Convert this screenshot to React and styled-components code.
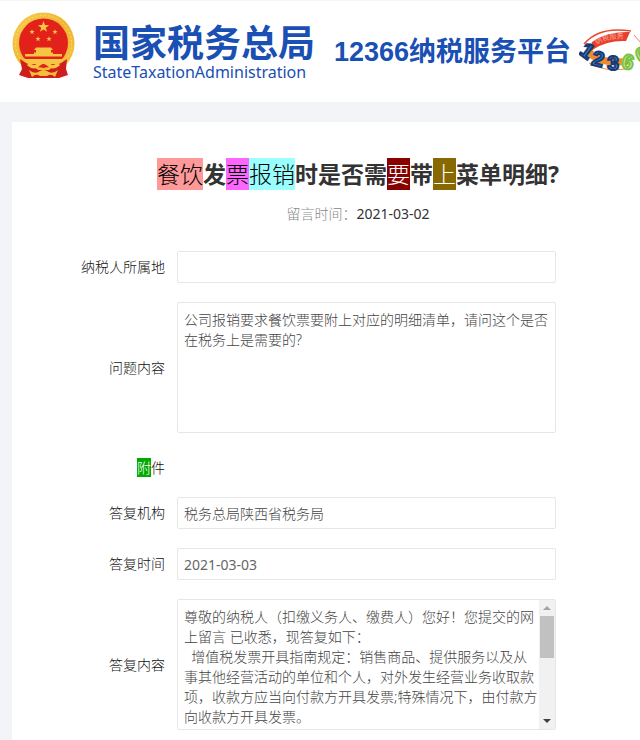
import styled, { createGlobalStyle } from 'styled-components';

const question =
  '公司报销要求餐饮票要附上对应的明细清单，请问这个是否在税务上是需要的?';

const reply = [
  '尊敬的纳税人（扣缴义务人、缴费人）您好！您提交的网上留言 已收悉，现答复如下：',
  '  增值税发票开具指南规定：销售商品、提供服务以及从事其他经营活动的单位和个人，对外发生经营业务收取款项，收款方应当向付款方开具发票;特殊情况下，由付款方向收款方开具发票。',
].join('\n');

const Star = ({ x, y, r }) => {
  const points = Array.from({ length: 10 }, (_, i) => {
    const radius = i % 2 ? r * 0.4 : r;
    const angle = (Math.PI / 5) * i - Math.PI / 2;
    return `${x + radius * Math.cos(angle)},${y + radius * Math.sin(angle)}`;
  }).join(' ');
  return <polygon points={points} fill="#f9c646" />;
};

const Emblem = () => (
  <svg width="63" height="68" viewBox="0 0 63 68" aria-hidden="true">
    <defs>
      <linearGradient id="gold" x1="0" y1="0" x2="1" y2="1">
        <stop offset="0" stopColor="#f6cf55" />
        <stop offset="0.5" stopColor="#efb52f" />
        <stop offset="1" stopColor="#f4c545" />
      </linearGradient>
    </defs>
    <circle cx="31.5" cy="31.5" r="31" fill="url(#gold)" />
    <circle cx="31.5" cy="31.5" r="28" fill="none" stroke="#f9dc75" strokeWidth="1" strokeDasharray="2 2" />
    <circle cx="31.5" cy="31" r="24.5" fill="#e3211b" />
    <Star x={31.5} y={15} r={6} />
    <Star x={20} y={20} r={2.8} />
    <Star x={43} y={20} r={2.8} />
    <Star x={26} y={27} r={2.8} />
    <Star x={37} y={27} r={2.8} />
    <path d="M24 35.5 H39 L41 38 H22 Z M24 38 H39 V41 H24 Z M22 40.5 H41 V42 H50 V44.5 H13 V42 H22 Z" fill="#f6c544" />
    <path d="M11 47 H52 L47 52 L37 52 Q31.5 48 26 52 L16 52 Z" fill="#f6c544" />
    <path d="M8 47 Q14 52 21 54 L26 58 H37 L42 54 Q49 52 55 47 L54 57 L56 63 L47 66 H16 L7 63 L10 57 Z" fill="#cf1f1c" />
    <path d="M16 52 Q22 57 26 53 Q31.5 48 37 53 Q41 57 47 52" fill="none" stroke="#f6c544" strokeWidth="3.5" />
    <path d="M17 58 Q23 63 28 59 Q31.5 57 35 59 Q40 63 46 58 L43 65 Q39 61 35 64 H28 Q24 61 20 65 Z" fill="#f4bd3a" />
    <circle cx="31.5" cy="54" r="2" fill="#e3211b" />
  </svg>
);

const HotlineLogo = () => (
  <svg width="84" height="46" viewBox="0 0 84 46" role="img" aria-label="12366">
    <path d="M5 15 Q20 -3 52 2" fill="none" stroke="#e9472c" strokeWidth="1.5" />
    <path d="M13 13 Q28 2 51 3 L47 12 Q29 11 15 20 L10 24 Z" fill="#e8402a" />
    <path d="M55 6 Q63 13 65 22" fill="none" stroke="#e9836b" strokeWidth="1" />
    <path d="M9 22 Q20 36 50 32" fill="none" stroke="#f28a2c" strokeWidth="7" />
    <path d="M10 34 Q25 43 47 40" fill="none" stroke="#ef8a50" strokeWidth="1" />
    <path id="band" d="M18 16 Q30 8 50 10" fill="none" />
    <LogoCaption>
      <textPath href="#band">纳税服务</textPath>
    </LogoCaption>
    <LogoDigit x="8" y="29" $tone="blue" transform="rotate(36 8 22)">1</LogoDigit>
    <LogoDigit x="19" y="37" $tone="blue" transform="rotate(14 19 30)">2</LogoDigit>
    <LogoDigit x="34" y="41" $tone="blue">3</LogoDigit>
    <LogoDigit x="49" y="40" $tone="green" transform="rotate(12 49 33)">6</LogoDigit>
    <LogoDigit x="63" y="33" $tone="green" transform="rotate(-25 63 26)">6</LogoDigit>
  </svg>
);

const FormRow = ({ id, label, children }) => (
  <Row>
    <Label htmlFor={id}>{label}</Label>
    {children}
  </Row>
);

const ScrollTextarea = props => (
  <ScrollBox>
    <BareTextarea {...props} />
    <ScrollTrack aria-hidden="true">
      <svg width="16" height="16" viewBox="0 0 16 16">
        <path d="M4 10 L8 6 L12 10 Z" fill="#a3a3a3" />
      </svg>
      <ScrollThumb />
      <svg width="16" height="16" viewBox="0 0 16 16">
        <path d="M4 6 L8 10 L12 6 Z" fill="#404040" />
      </svg>
    </ScrollTrack>
  </ScrollBox>
);

const App = () => {
  return (
    <>
      <GlobalStyle />
      <Page>
        <Header>
          <Emblem />
          <Brand>
            <BrandName>国家税务总局</BrandName>
            <BrandSub>StateTaxationAdministration</BrandSub>
          </Brand>
          <Platform>12366纳税服务平台</Platform>
          <HotlineLogo />
        </Header>
        <Card>
          <Title>
            <Mark $bg="#ff9999">餐饮</Mark>发<Mark $bg="#ff66ff">票</Mark>
            <Mark $bg="#99ffff">报销</Mark>时是否需
            <Mark $bg="#880000" $color="#fff">要</Mark>带
            <Mark $bg="#886800" $color="#fff">上</Mark>菜单明细?
          </Title>
          <Posted>
            留言时间：<time dateTime="2021-03-02">2021-03-02</time>
          </Posted>
          <Form>
            <FormRow id="region" label="纳税人所属地">
              <Input id="region" readOnly />
            </FormRow>
            <FormRow id="question" label="问题内容">
              <Textarea id="question" readOnly defaultValue={question} />
            </FormRow>
            <AttachmentRow>
              <LabelText>
                <Mark $bg="#00aa00" $color="#fff">附</Mark>件
              </LabelText>
            </AttachmentRow>
            <FormRow id="office" label="答复机构">
              <Input id="office" readOnly defaultValue="税务总局陕西省税务局" />
            </FormRow>
            <FormRow id="replyDate" label="答复时间">
              <DateInput id="replyDate" readOnly defaultValue="2021-03-03" />
            </FormRow>
            <FormRow id="reply" label="答复内容">
              <ScrollTextarea id="reply" readOnly defaultValue={reply} />
            </FormRow>
          </Form>
        </Card>
      </Page>
    </>
  );
};

const GlobalStyle = createGlobalStyle`
  * {
    box-sizing: border-box;
  }

  body {
    margin: 0;
    background: #f3f4f7;
    color: #333;
    font-family: 'Noto Sans', 'Noto Sans CJK SC', sans-serif;
    font-size: 14px;
    font-weight: 300;
    line-height: 20px;
  }
`;

const Page = styled.div`
  display: flex;
  flex-direction: column;
  min-height: 100vh;
`;

const Header = styled.header`
  display: flex;
  align-items: flex-start;
  overflow: hidden;
  padding: 11px 0 11px 12px;
  height: 102px;
  background: #fff;
  border-top: 1px solid #f6f6f6;

  > * {
    flex-shrink: 0;
  }

  > svg:last-child {
    margin: 17px 0 0 8px;
  }
`;

const Brand = styled.div`
  margin: 12px 0 0 18px;
  color: #1a4fb4;
`;

const BrandName = styled.div`
  font-size: 37px;
  font-weight: 700;
  line-height: 38px;
`;

const BrandSub = styled.div`
  font-size: 16px;
  font-weight: 400;
  line-height: 20px;
`;

const Platform = styled.div`
  margin: 22px 0 0 19px;
  color: #1a4fb4;
  font-family: 'Liberation Sans', 'Noto Sans CJK SC', sans-serif;
  font-size: 27px;
  font-weight: 700;
  line-height: 36px;
`;

const LogoCaption = styled.text`
  fill: #fbd9cf;
  font-size: 7px;
`;

const LogoDigit = styled.text`
  fill: ${props => (props.$tone === 'blue' ? '#5b8ccb' : '#f2fbe4')};
  stroke: ${props => (props.$tone === 'blue' ? '#143c78' : '#78c442')};
  stroke-width: 2px;
  font-family: 'Liberation Sans', sans-serif;
  font-size: 21px;
  font-weight: 700;
  text-anchor: middle;
`;

const Card = styled.main`
  flex: 1;
  margin: 20px 0 0 12px;
  padding: 36px 0 10px 64px;
  background: #fff;
`;

const Title = styled.h1`
  margin: 0;
  font-size: 23px;
  line-height: 32px;
  text-align: center;
`;

const Mark = styled.mark`
  background: ${props => props.$bg};
  color: ${props => props.$color || '#000'};
  font-weight: 300;
`;

const Posted = styled.p`
  margin: 14px 0 27px;
  color: #888;
  text-align: center;

  time {
    color: #333;
    font-weight: 400;
  }
`;

const Form = styled.form`
  display: flex;
  flex-direction: column;
  gap: 19px;
  padding-right: 84px;
`;

const Row = styled.div`
  display: grid;
  grid-template-columns: 89px 1fr;
  column-gap: 12px;
  align-items: center;
`;

const AttachmentRow = styled(Row)`
  height: 26px;
  align-items: end;
`;

const Label = styled.label`
  color: #111;
  text-align: right;
`;

const LabelText = styled.span`
  color: #111;
  text-align: right;
`;

const Input = styled.input`
  width: 100%;
  height: 32px;
  padding: 0 6px;
  border: 1px solid #e6e6e6;
  border-radius: 2px;
  background: #fff;
  color: #444;
  font: inherit;
  outline: none;
`;

const DateInput = styled(Input)`
  color: #666;
  font-weight: 400;
`;

const Textarea = styled.textarea`
  display: block;
  width: 100%;
  height: 131px;
  padding: 7px 6px;
  border: 1px solid #e6e6e6;
  border-radius: 2px;
  background: #fff;
  color: #444;
  font: inherit;
  outline: none;
  resize: none;
`;

const ScrollBox = styled.div`
  display: flex;
  height: 131px;
  border: 1px solid #e6e6e6;
  border-radius: 2px;
`;

const BareTextarea = styled(Textarea)`
  flex: 1;
  min-width: 0;
  height: 100%;
  padding-right: 0;
  border: 0;
  scrollbar-width: none;
`;

const ScrollTrack = styled.div`
  display: flex;
  flex-direction: column;
  width: 16px;
  background: #f1f1f1;

  svg:last-child {
    margin-top: auto;
  }
`;

const ScrollThumb = styled.div`
  height: 42px;
  margin: 0 1px;
  background: #c1c1c1;
`;

export default App;
